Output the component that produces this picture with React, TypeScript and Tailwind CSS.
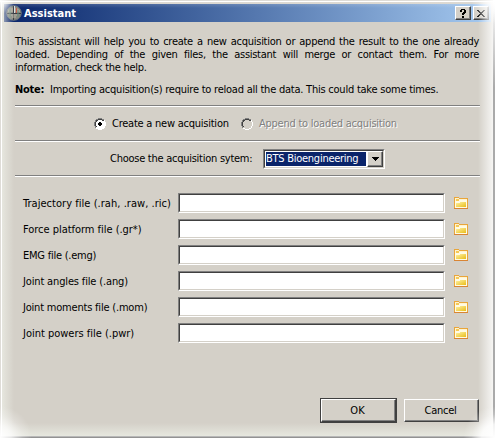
import React from 'react';

const fields = [
  { label: 'Trajectory file (.rah, .raw, .ric)', spacing: 'tracking-[0.04px]' },
  { label: 'Force platform file (.gr*)', spacing: 'tracking-[-0.03px]' },
  { label: 'EMG file (.emg)', spacing: 'tracking-[-0.24px]' },
  { label: 'Joint angles file (.ang)', spacing: 'tracking-[-0.15px]' },
  { label: 'Joint moments file (.mom)', spacing: 'tracking-[-0.2px]' },
  { label: 'Joint powers file (.pwr)', spacing: 'tracking-[-0.01px]' },
];

function Folder() {
  return (
    <svg width="14" height="12" viewBox="0 0 14 12" shapeRendering="crispEdges">
      <defs>
        <linearGradient id="folder" x1="0" y1="0" x2="1" y2="1">
          <stop offset="0" stopColor="#fff3a8" />
          <stop offset="1" stopColor="#e9bd18" />
        </linearGradient>
      </defs>
      <path d="M0 0H5V1H14V12H0Z" fill="#e9a63a" />
      <path d="M1 1H5V2H13V5H1Z" fill="#fff3cf" />
      <path d="M2 2H5V3H12V4H2Z" fill="#f6c956" />
      <path d="M1 4H5V3H13V11H1Z" fill="#fffbe3" />
      <path d="M2 6H6V5H12V10H2Z" fill="url(#folder)" />
      <path d="M0 11H14V12H0Z" fill="#d98534" />
    </svg>
  );
}

function Radio({ checked = false }: { checked?: boolean }) {
  return (
    <svg width="12" height="12" viewBox="0 0 12 12" shapeRendering="crispEdges">
      <path d="M4 1H8V2H10V4H11V8H10V10H8V11H4V10H2V8H1V4H2V2H4Z" fill={checked ? '#fff' : '#d4d0c8'} />
      <path d="M4 0H8V1H10V2H8V1H4V2H2V4H1V8H2V10H1V8H0V4H1V2H2V1H4Z" fill="#808080" />
      <path d="M4 1H8V2H10V3H8V2H4V3H3V4H2V8H3V9H2V8H1V4H2V2H4Z" fill="#404040" />
      <path d="M10 2H11V4H12V8H11V10H10V11H8V12H4V11H2V10H4V11H8V10H10V8H11V4H10Z" fill="#fff" />
      {checked && <path d="M5 4H7V5H8V7H7V8H5V7H4V5H5Z" fill="#000" />}
    </svg>
  );
}

function Rule() {
  return <div className="h-[2px] w-[465px] shrink-0 border-t border-[#808080] bg-white" />;
}

const raised =
  'flex items-center justify-center bg-[#d4d0c8] border border-t-white border-l-white border-r-[#404040] border-b-[#404040] shadow-[inset_-1px_-1px_0_#808080]';

export default function App() {
  return (
    <div className="relative h-[438px] w-[495px] overflow-hidden bg-[#d4d0c8] pt-[4px] text-[11px] leading-[13px] text-black [font-family:'DejaVu_Sans_Condensed','DejaVu_Sans',sans-serif] [font-stretch:condensed]">
      <div className="ml-[4px] flex h-[18px] w-[487px] items-center bg-linear-to-r from-[#0a246a] to-[#a6caf0] pl-[2px] pr-[2px]">
        <svg width="16" height="16" viewBox="0 0 16 16">
          <circle cx="8" cy="8" r="7.3" fill="#85877f" stroke="#606c78" />
          <path d="M2 5Q8 0 14 5V7H2Z" fill="#b7b0a2" opacity=".65" />
          <path d="M1 8.5H15M7.5 1V15" stroke="#383c42" strokeWidth="1" />
          <path d="M8.5 1V8" stroke="#d9dce1" />
          <path d="M10.5 3V8" stroke="#c65a48" />
          <path d="M4 4V13M12 5V12" stroke="#689081" />
          <path d="M5 10H11M6 12H10" stroke="#bab5a8" />
        </svg>
        <span className="ml-[2px] flex-1 text-[11px] font-bold tracking-[0.02px] text-white">Assistant</span>
        <div className={`${raised} h-[14px] w-[16px]`}>
          <svg width="8" height="9" viewBox="0 0 8 9" shapeRendering="crispEdges">
            <path d="M1 1H2V0H6V1H7V4H6V5H5V6H3V4H4V3H5V1H3V3H1ZM3 7H5V9H3Z" />
          </svg>
        </div>
        <div className={`${raised} ml-[2px] h-[14px] w-[16px]`}>
          <svg width="8" height="7" viewBox="0 0 8 7" shapeRendering="crispEdges">
            <path d="M0 0H2V1H3V2H5V1H6V0H8V1H7V2H6V3H5V4H6V5H7V6H8V7H6V6H5V5H3V6H2V7H0V6H1V5H2V4H3V3H2V2H1V1H0Z" fill="#181818" />
          </svg>
        </div>
      </div>

      <div className="flex w-[480px] flex-col pl-[15px]">
        <div className="h-[83px] pt-[13px] tracking-[-0.28px]">
          <div className="w-[464px] [text-align-last:justify] whitespace-nowrap">This assistant will help you to create a new acquisition or append the result to the one already</div>
          <div className="w-[464px] [text-align-last:justify] whitespace-nowrap">loaded. Depending of the given files, the assistant will merge or contact them. For more</div>
          <div>information, check the help.</div>
          <div className="mt-[9px] flex whitespace-nowrap">
            <b className="w-[35px]">Note:</b>
            <span className="tracking-[-0.23px]">Importing acquisition(s) require to reload all the data. This could take some times.</span>
          </div>
        </div>
        <Rule />
        <div className="flex h-[33px] items-center pl-[79px] tracking-[-0.24px] whitespace-nowrap">
          <Radio checked />
          <span className="ml-[6px] w-[129px]">Create a new acquisition</span>
          <Radio />
          <span className="ml-[6px] text-[#808080] [text-shadow:1px_1px_0_#fff]">Append to loaded acquisition</span>
        </div>
        <Rule />
        <div className="flex h-[33px] items-center pl-[95px] tracking-[-0.26px] whitespace-nowrap">
          <span className="w-[153px]">Choose the acquisition sytem:</span>
          <div className="flex h-[20px] w-[122px] border border-t-[#808080] border-l-[#808080] border-r-white border-b-white bg-white">
            <div className="flex flex-1 border border-t-[#404040] border-l-[#404040] border-r-[#d4d0c8] border-b-[#d4d0c8] p-px">
              <div className="flex flex-1 items-center bg-[#0a246a] text-white">BTS Bioengineering</div>
              <div className={`${raised} -my-px -mr-px ml-px w-[16px]`}>
                <svg width="7" height="4" viewBox="0 0 7 4" shapeRendering="crispEdges"><path d="M0 0H7V1H6V2H5V3H4V4H3V3H2V2H1V1H0Z" /></svg>
              </div>
            </div>
          </div>
        </div>
        <Rule />
        <div className="flex flex-col gap-[6px] pt-[16px]">
          {fields.map((field) => (
            <div key={field.label} className="flex h-[20px] items-center pl-[8px]">
              <label className={`w-[155px] whitespace-nowrap ${field.spacing}`}>{field.label}</label>
              <div className="h-[20px] w-[267px] border border-t-[#808080] border-l-[#808080] border-r-white border-b-white bg-white">
                <div className="h-full border border-t-[#404040] border-l-[#404040] border-r-[#d4d0c8] border-b-[#d4d0c8]" />
              </div>
              <div className="ml-[9px]"><Folder /></div>
            </div>
          ))}
        </div>
        <div className="mt-[55px] flex items-center justify-end gap-[7px] pr-px">
          <div className="h-[25px] w-[77px] border border-[#404040]">
            <div className={`${raised} h-full pr-[2px]`}>OK</div>
          </div>
          <div className={`${raised} h-[23px] w-[75px] pr-[2px] tracking-[-0.24px]`}>Cancel</div>
        </div>
      </div>

      <div className="pointer-events-none absolute inset-0">
        <div className="absolute inset-y-0 left-0 w-[14px] bg-linear-to-r from-[#eef0e8]/80 to-transparent" />
        <div className="absolute inset-y-0 right-0 w-[17px] bg-linear-to-l from-white/90 to-transparent" />
        <div className="absolute inset-x-0 bottom-0 h-[15px] bg-linear-to-t from-[#e9ebe2] to-transparent" />
        <div className="absolute inset-x-0 top-0 h-[8px] bg-linear-to-b from-white/30 to-transparent" />
        <div className="absolute inset-y-0 left-0 w-[2px] border-r border-white bg-[#dedcd7]" />
        <div className="absolute inset-x-0 top-0 h-[2px] border-b border-white bg-[#dedcd7]" />
        <div className="absolute inset-y-0 right-0 w-[2px] bg-linear-to-b from-white via-[#aaa] via-20% to-[#aaa]" />
        <div className="absolute inset-x-0 bottom-0 h-[2px] border-t border-[#b7b7b7] bg-[#929292]" />
        <div className="absolute bottom-0 left-0 h-[32px] w-[32px] bg-[radial-gradient(circle_at_bottom_left,#fff_0%,rgba(255,255,255,0.75)_25%,rgba(255,255,255,0.25)_50%,transparent_70%)]" />
        <div className="absolute right-0 bottom-0 h-[32px] w-[32px] bg-[radial-gradient(circle_at_bottom_right,#fff_0%,rgba(255,255,255,0.85)_30%,rgba(255,255,255,0.25)_52%,transparent_70%)]" />
        <div className="absolute top-0 right-0 h-[24px] w-[24px] bg-[radial-gradient(circle_at_top_right,#fff_0%,transparent_70%)]" />
        <div className="absolute top-0 left-0 h-[20px] w-[20px] bg-[radial-gradient(circle_at_top_left,#fff_0%,transparent_50%)]" />
      </div>
    </div>
  );
}
